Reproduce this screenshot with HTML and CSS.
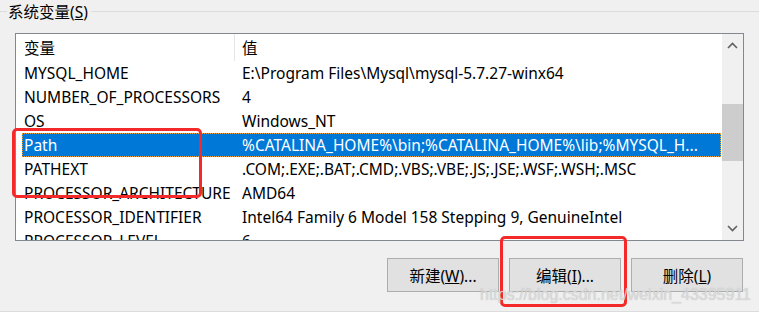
FILE: index.html
```html
<!DOCTYPE html>
<html lang="zh-CN">
<head>
  <meta charset="UTF-8">
  <title>系统变量</title>
  <link rel="stylesheet" href="styles.css">
</head>
<body>
  <div class="panel">
    <div class="legend">
      <span class="legend-line short"></span>
      <span class="legend-text">系统变量(<u>S</u>)</span>
      <span class="legend-line"></span>
    </div>

    <div class="listbox">
      <div class="list-content">
        <div class="row head">
          <div class="col name">变量</div>
          <div class="col value">值</div>
        </div>
        <div class="row">
          <div class="col name">MYSQL_HOME</div>
          <div class="col value">E:\Program Files\Mysql\mysql-5.7.27-winx64</div>
        </div>
        <div class="row">
          <div class="col name">NUMBER_OF_PROCESSORS</div>
          <div class="col value">4</div>
        </div>
        <div class="row">
          <div class="col name">OS</div>
          <div class="col value">Windows_NT</div>
        </div>
        <div class="row selected">
          <div class="col name">Path</div>
          <div class="col value">%CATALINA_HOME%\bin;%CATALINA_HOME%\lib;%MYSQL_H...</div>
        </div>
        <div class="row">
          <div class="col name">PATHEXT</div>
          <div class="col value">.COM;.EXE;.BAT;.CMD;.VBS;.VBE;.JS;.JSE;.WSF;.WSH;.MSC</div>
        </div>
        <div class="row">
          <div class="col name">PROCESSOR_ARCHITECTURE</div>
          <div class="col value">AMD64</div>
        </div>
        <div class="row">
          <div class="col name">PROCESSOR_IDENTIFIER</div>
          <div class="col value">Intel64 Family 6 Model 158 Stepping 9, GenuineIntel</div>
        </div>
        <div class="row">
          <div class="col name">PROCESSOR_LEVEL</div>
          <div class="col value">6</div>
        </div>
      </div>
      <div class="scrollbar">
        <svg class="arrow" width="11" height="7" viewBox="0 0 11 7"><path d="M1 6 L5.5 1.5 L10 6" fill="none" stroke="#606060" stroke-width="1.6"/></svg>
        <div class="track">
          <div class="thumb"></div>
        </div>
        <svg class="arrow" width="11" height="7" viewBox="0 0 11 7"><path d="M1 1 L5.5 5.5 L10 1" fill="none" stroke="#606060" stroke-width="1.6"/></svg>
      </div>
    </div>

    <div class="buttons">
      <button class="btn">新建(<u>W</u>)...</button>
      <button class="btn">编辑(<u>I</u>)...</button>
      <button class="btn">删除(<u>L</u>)</button>
    </div>
  </div>
  <div class="footer"></div>

  <!-- annotations drawn over the screenshot -->
  <div class="mark mark-rows"></div>
  <div class="mark mark-edit"></div>
  <div class="watermark">https://blog.csdn.net/weixin_43395911</div>
</body>
</html>
```

FILE: styles.css
```css
body {
  margin: 0;
  width: 759px;
  height: 317px;
  overflow: hidden;
  position: relative;
  background-color: #f0f0f0;
  font-family: "Noto Sans", "Noto Sans CJK SC", sans-serif;
  font-size: 15.5px;
  color: #000;
}
.panel {
  height: 312px;
}
.legend {
  display: flex;
  align-items: center;
  height: 24px;
  margin-top: -1px;
}
.legend-line {
  flex: 1;
  height: 1px;
  background-color: #dcdcdc;
}
.legend-line.short {
  flex: 0 0 7px;
}
.legend-text {
  padding: 0 3px 0 1px;
  font-size: 15.5px;
}
.listbox {
  display: flex;
  margin: 10px 0 0 15px;
  width: 727px;
  height: 206px;
  border: 1px solid #828790;
  background-color: #fff;
}
.list-content {
  flex: 1;
  overflow: hidden;
  padding-left: 6px;
}
.row {
  display: flex;
  align-items: center;
  height: 24px;
  white-space: nowrap;
  box-sizing: border-box;
}
.row.head {
  height: 27px;
}
.col.name {
  width: 211px;
  padding-left: 2px;
  overflow: hidden;
}
.col.value {
  padding-left: 7px;
}
.row.head .col {
  height: 27px;
  line-height: 28px;
}
.row.head .col.name {
  border-right: 1px solid #e5e5e5;
  width: 210px;
}
.row.selected {
  background-color: #0078d7;
  color: #fff;
  border: 1px dotted #e8a040;
}
.row.selected .col.name {
  padding-left: 1px;
}
.scrollbar {
  width: 21px;
  display: flex;
  flex-direction: column;
  align-items: center;
  background-color: #f0f0f0;
  border-left: 1px solid #fff;
}
.arrow {
  margin: 8px 0;
}
.track {
  flex: 1;
  width: 100%;
  padding-top: 47px;
}
.thumb {
  height: 57px;
  background-color: #cdcdcd;
}
.buttons {
  display: flex;
  justify-content: flex-end;
  gap: 10px;
  margin: 17px 16px 0 0;
}
.btn {
  width: 112px;
  height: 34px;
  font-family: "Noto Sans", "Noto Sans CJK SC", sans-serif;
  font-size: 15.5px;
  color: #000;
  background-color: #e1e1e1;
  border: 1px solid #adadad;
  padding: 0;
}
.footer {
  height: 5px;
  border-top: 1px solid #dcdcdc;
  background-color: #fff;
}
.mark {
  position: absolute;
  border: 3px solid #f42a2a;
  border-radius: 5px;
}
.mark-rows {
  left: 12px;
  top: 128px;
  width: 184px;
  height: 64px;
}
.mark-edit {
  left: 500px;
  top: 236px;
  width: 121px;
  height: 65px;
}
.watermark {
  position: absolute;
  left: 480px;
  top: 286px;
  font-family: "Liberation Sans", sans-serif;
  font-size: 16px;
  color: rgba(225, 225, 225, 0.8);
  text-shadow: 0 0 1px rgba(160, 160, 160, 0.7);
}
```
